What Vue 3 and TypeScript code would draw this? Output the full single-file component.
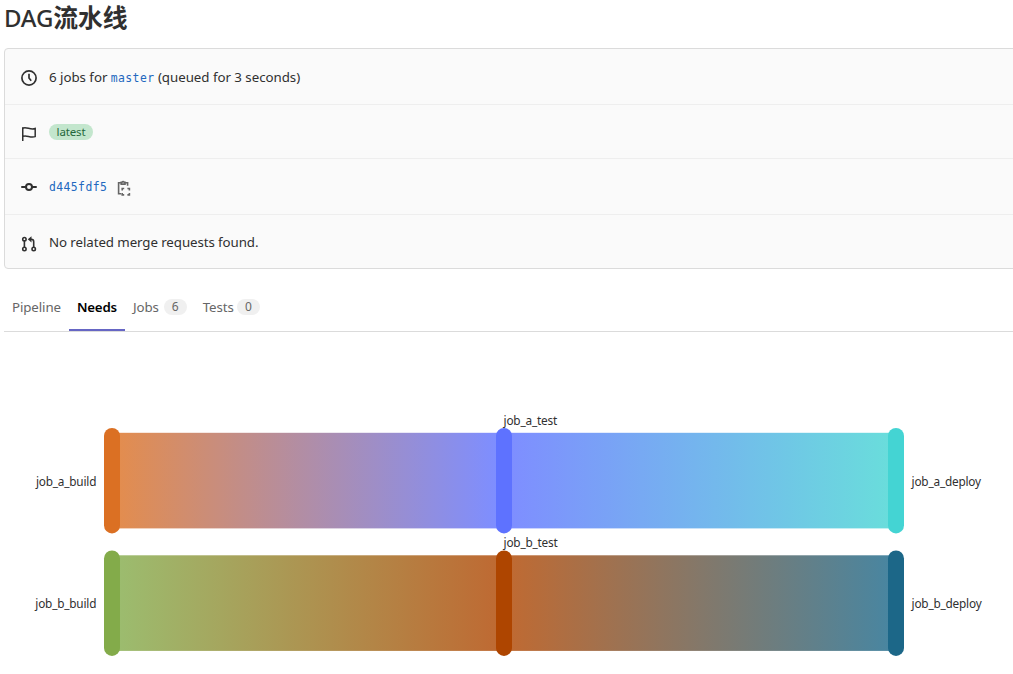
<script setup lang="ts">
interface Tab { name: string; count?: number; active?: boolean }
interface Chain { id: string; top: number; labelY: number; colors: [string, string, string]; names: [string, string, string] }

const tabs: Tab[] = [
  { name: 'Pipeline' },
  { name: 'Needs', active: true },
  { name: 'Jobs', count: 6 },
  { name: 'Tests', count: 0 },
]

const chains: Chain[] = [
  { id: 'a', top: 96, labelY: 154, colors: ['#db7023', '#5e72ff', '#44d4d3'], names: ['job_a_build', 'job_a_test', 'job_a_deploy'] },
  { id: 'b', top: 218.5, labelY: 276, colors: ['#83ab4a', '#ae4500', '#1c6788'], names: ['job_b_build', 'job_b_test', 'job_b_deploy'] },
]
</script>

<template>
  <main class="page">
    <h1 class="title">DAG<span class="cjk">流水线</span></h1>

    <section class="info">
      <div class="row jobs-row">
        <svg class="icon" viewBox="0 0 16 16"><circle cx="8" cy="8" r="7.1" /><path d="M8 3.7V8l2.2 2.7" /></svg>
        <span class="text">6 jobs for <a class="mono ref">master</a> (queued for 3 seconds)</span>
      </div>
      <div class="row flag-row">
        <svg class="icon" viewBox="0 0 16 16"><path class="thin" d="M1.75 15V1.2M1.75 2.2C5.5.4 9.5 4.4 14.2 2.5v8.1c-4.7 1.8-8.5-1.9-12.4-.2" /></svg>
        <span class="badge">latest</span>
      </div>
      <div class="row commit-row">
        <svg class="icon commit" viewBox="0 0 16 16"><path d="M1 8h4M11 8h4" stroke-linecap="round" /><circle cx="8" cy="8" r="3" /></svg>
        <a class="mono sha">d445fdf5</a>
        <svg class="icon copy" viewBox="0 0 16 16">
          <path d="M5 2.8H2.6v11h2.6M9 2.8h2.6v3" />
          <path d="M5.2 4.1V2.2h.9a1.1 1.1 0 0 1 2 0H9v1.9z" />
          <path d="M6.2 10.4V8.5h2M11.4 8.5h2v1.9M13.4 12.9v2h-2M8.2 14.9h-2v-2" />
        </svg>
      </div>
      <div class="row merge-row">
        <svg class="icon merge" viewBox="0 0 16 16">
          <circle cx="3.4" cy="3.2" r="1.7" /><circle cx="3.4" cy="13" r="1.7" /><circle cx="12.7" cy="13" r="1.7" />
          <path d="M3.4 4.9v6.4M12.7 11.3V5.8c0-1.7-.8-2.5-2.5-2.5H8.5" /><path class="fill" d="M6.8 3.3 10.5.2v6.2z" />
        </svg>
        <span class="text related">No related merge requests found.</span>
      </div>
    </section>

    <nav class="tabs">
      <a v-for="tab in tabs" :key="tab.name" class="tab" :class="{ active: tab.active }">
        <span class="tab-name">{{ tab.name }}</span><span v-if="tab.count !== undefined" class="count">{{ tab.count }}</span>
      </a>
    </nav>

    <svg class="graph" width="1013" height="342" viewBox="0 0 1013 342">
      <defs>
        <template v-for="c in chains" :key="c.id">
          <linearGradient :id="`${c.id}-left`" gradientUnits="userSpaceOnUse" x1="120" y1="0" x2="496" y2="0">
            <stop offset="0" :stop-color="c.colors[0]" /><stop offset="1" :stop-color="c.colors[1]" />
          </linearGradient>
          <linearGradient :id="`${c.id}-right`" gradientUnits="userSpaceOnUse" x1="512" y1="0" x2="888" y2="0">
            <stop offset="0" :stop-color="c.colors[1]" /><stop offset="1" :stop-color="c.colors[2]" />
          </linearGradient>
        </template>
      </defs>
      <g v-for="c in chains" :key="c.id">
        <rect x="112" :y="c.top + 4.8" width="392" height="95.6" :fill="`url(#${c.id}-left)`" opacity=".8" />
        <rect x="504" :y="c.top + 4.8" width="392" height="95.6" :fill="`url(#${c.id}-right)`" opacity=".8" />
        <text class="label" x="96.2" :y="c.labelY" text-anchor="end">{{ c.names[0] }}</text>
        <text class="label" x="503.6" :y="c.labelY - 61">{{ c.names[1] }}</text>
        <text class="label" x="911.6" :y="c.labelY">{{ c.names[2] }}</text>
        <rect v-for="(color, i) in c.colors" :key="color" :x="104 + i * 392" :y="c.top" width="16" height="105.4" rx="8" :fill="color" />
      </g>
    </svg>
  </main>
</template>

<style>
body { margin: 0; background: #fff; overflow: hidden; }
</style>

<style scoped>
.page { width: 1013px; height: 674px; overflow: hidden; color: #303030; font: 13.3px/20px "Noto Sans", "Open Sans", "Noto Sans CJK SC", sans-serif; }
.title { height: 32px; margin: 0 0 16px 4px; font-size: 24px; line-height: 32px; font-weight: 500; letter-spacing: -0.2px; }
.cjk { font-family: "Noto Sans CJK SC", sans-serif; font-size: 24.8px; font-weight: 700; letter-spacing: 0; }
.info { box-sizing: border-box; height: 221px; width: 1020px; margin-left: 4px; border: 1px solid #dbdbdb; border-radius: 4px; background: #fafafa; }
.row { box-sizing: border-box; height: 56px; padding-left: 16px; display: flex; align-items: center; border-bottom: 1px solid #eee; }
.jobs-row .text { margin-top: 2px; letter-spacing: -0.03px; }
.flag-row { height: 54px; }
.merge-row { height: 53px; border: 0; }
.related { letter-spacing: -0.08px; }
.icon { width: 16px; height: 16px; margin: 2px 12px 0 0; flex: none; fill: none; stroke: #303030; stroke-width: 1.7; }
.flag-row .icon { margin-top: 4px; }
.thin { stroke-width: 1.5; }
.commit-row .icon { margin-top: 1px; }
.commit-row .commit { stroke-width: 2; }
.commit-row .copy { margin: 3px 0 0 9px; stroke: #666; stroke-width: 1.6; }
.merge-row .icon { margin-top: 4px; stroke-width: 1.6; }
.fill { fill: #303030; stroke: none; }
.mono { font-family: "DejaVu Sans Mono", monospace; font-size: 11.4px; letter-spacing: 0.42px; color: #2268bf; }
.badge { box-sizing: border-box; width: 44px; height: 16px; text-align: center; border-radius: 8px; background: #c3e6cd; color: #24663b; font-size: 11.5px; letter-spacing: -0.15px; line-height: 16px; }
.tabs { box-sizing: border-box; height: 63px; margin-left: 4px; display: flex; border-bottom: 1px solid #dbdbdb; }
.tab { box-sizing: border-box; height: 62px; padding: 28px 8px 0; display: flex; color: #666; white-space: nowrap; letter-spacing: -0.1px; }
.active { color: #000; font-weight: 600; border-bottom: 2px solid #6666c4; letter-spacing: -0.2px; }
.count { box-sizing: border-box; width: 23px; height: 16px; margin: 2px 0 0 5px; border-radius: 8px; background: #f0f0f0; color: #666; font-size: 12px; line-height: 16px; text-align: center; }
.tab:last-child .count { margin-left: 3px; }
.graph { display: block; }
.label { fill: #303030; font-size: 11.8px; letter-spacing: -0.2px; }
</style>
